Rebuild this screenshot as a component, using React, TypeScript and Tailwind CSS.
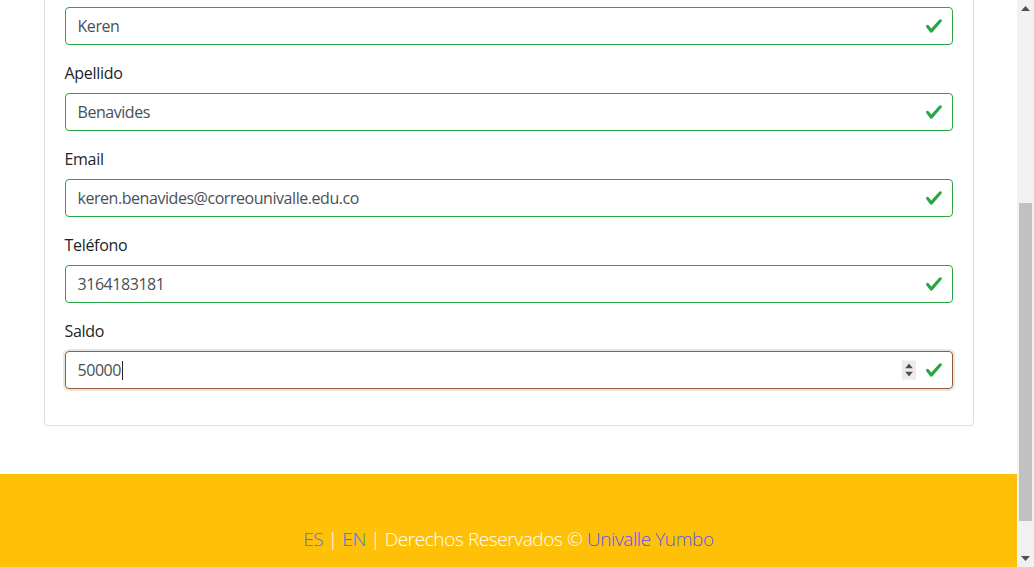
import React from "react";

const Check = () => (
  <svg
    viewBox="0 0 8 8"
    className="absolute right-[10px] top-1/2 -translate-y-1/2 w-[18px] h-[18px]"
  >
    <path
      fill="#28a745"
      d="M2.3 6.73L.6 4.53c-.4-1.04.46-1.4 1.1-.8l1.1 1.4 3.4-3.8c.6-.63 1.6-.27 1.2.7l-4 4.6c-.43.5-.8.4-1.1.1z"
    />
  </svg>
);

const fields = [
  { label: "Apellido", value: "Benavides" },
  { label: "Email", value: "keren.benavides@correounivalle.edu.co" },
  { label: "Teléfono", value: "3164183181" },
];

const App = () => {
  return (
    <div className="h-[567px] flex overflow-hidden bg-white font-['Segoe_UI','Open_Sans',sans-serif]">
      <div className="flex-1 flex flex-col">
        {/* Card (scrolled, top cut off) */}
        <div className="mx-auto w-[930px] border border-t-0 border-[#dfdfdf] rounded-b-[4px] px-5 pb-5 pt-[7px]">
          <div className="mb-4 relative">
            <div className="h-[38px] border border-[#28a745] rounded-[4px] px-3 flex items-center text-[16px] tracking-[-0.45px] text-[#495057]">
              Keren
            </div>
            <Check />
          </div>

          {fields.map((f) => (
            <div key={f.label} className="mb-4">
              <div className="text-[16px] leading-6 tracking-[-0.3px] text-[#212529] mb-2">{f.label}</div>
              <div className="relative">
                <div className="h-[38px] border border-[#28a745] rounded-[4px] px-3 flex items-center text-[16px] tracking-[-0.45px] text-[#495057]">
                  {f.value}
                </div>
                <Check />
              </div>
            </div>
          ))}

          <div className="mb-4">
            <div className="text-[16px] leading-6 tracking-[-0.3px] text-[#212529] mb-2">Saldo</div>
            <div className="relative">
              <div className="h-[38px] border border-[#9a5a35] rounded-[4px] px-3 flex items-center text-[16px] tracking-[-0.45px] text-[#495057] shadow-[0_0_0_2px_rgba(200,200,190,0.45)]">
                50000
                <span className="w-px h-[19px] bg-[#222] ml-[1px]" />
              </div>
              <div className="absolute right-[37px] top-1/2 -translate-y-1/2 w-[14px] h-[19px] bg-[#ececec] flex flex-col items-center justify-center gap-[3px]">
                <svg width="8" height="5" viewBox="0 0 8 5">
                  <path d="M0 5 L4 0 L8 5 Z" fill="#505050" />
                </svg>
                <svg width="8" height="5" viewBox="0 0 8 5">
                  <path d="M0 0 L4 5 L8 0 Z" fill="#505050" />
                </svg>
              </div>
              <Check />
            </div>
          </div>
        </div>

        {/* Footer */}
        <footer className="mt-[48px] flex-1 bg-[#ffc107] pt-[50px] text-center">
          <p className="text-[19px] leading-[30px] tracking-[-0.4px] font-light text-white">
            <a href="#" className="text-[#5468f4]">ES</a> |{" "}
            <a href="#" className="text-[#1a7cff]">EN</a> | Derechos Reservados ©{" "}
            <a href="#" className="text-[#5858f6]">Univalle Yumbo</a>
          </p>
        </footer>
      </div>

      {/* Scrollbar */}
      <div className="w-[17px] bg-[#f1f1f1] flex flex-col items-center">
        <div className="h-[17px] flex items-center justify-center">
          <svg width="9" height="5" viewBox="0 0 9 5">
            <path d="M0 5 L4.5 0 L9 5 Z" fill="#505050" />
          </svg>
        </div>
        <div className="mt-[186px] w-[13px] h-[318px] bg-[#c1c1c1]" />
        <div className="flex-1" />
        <div className="h-[17px] flex items-center justify-center">
          <svg width="9" height="5" viewBox="0 0 9 5">
            <path d="M0 0 L4.5 5 L9 0 Z" fill="#505050" />
          </svg>
        </div>
      </div>
    </div>
  );
};

export default App;
